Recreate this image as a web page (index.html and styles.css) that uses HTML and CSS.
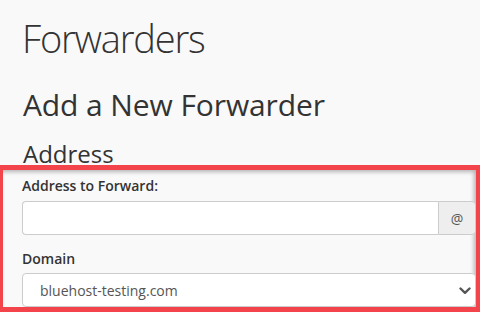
FILE: index.html
```html
<!DOCTYPE html>
<html lang="en">
<head>
<meta charset="utf-8">
<title>Forwarders</title>
<link rel="stylesheet" href="styles.css">
</head>
<body>
<div class="page">
  <h1 class="title">Forwarders</h1>
  <h2 class="subtitle">Add a New Forwarder</h2>
  <h3 class="section">Address</h3>
</div>
<section class="highlight">
  <label class="label" for="fwd">Address to Forward:</label>
  <div class="input-group">
    <input id="fwd" class="input" type="text">
    <span class="addon">@</span>
  </div>
  <label class="label label-domain" for="domain">Domain</label>
  <div class="select-wrap">
    <select id="domain" class="select">
      <option>bluehost-testing.com</option>
    </select>
    <svg class="chevron" width="12" height="8" viewBox="0 0 12 8" aria-hidden="true">
      <path d="M1.5 1.5 L6 5.8 L10.5 1.5" fill="none" stroke="#555" stroke-width="2.4" stroke-linecap="round" stroke-linejoin="round"/>
    </svg>
  </div>
</section>
</body>
</html>
```
FILE: styles.css
```css
* { box-sizing: border-box; }
html, body {
  margin: 0;
  padding: 0;
  height: 312px;
  overflow: hidden;
}
body {
  background: #f9f9f9;
  color: #333;
  font-family: "Open Sans", "Liberation Sans", sans-serif;
}
.page {
  padding-left: 22px;
}
.title {
  margin: 17px 0 0;
  font-size: 38px;
  line-height: 42px;
  font-weight: 300;
  letter-spacing: -1.2px;
}
.subtitle {
  margin: 29px 0 0 1px;
  font-size: 30px;
  line-height: 34px;
  font-weight: 400;
  letter-spacing: -0.1px;
}
.section {
  margin: 20px 0 -1px 1px;
  font-size: 24px;
  line-height: 24px;
  font-weight: 400;
}
.highlight {
  position: relative;
  border-style: solid;
  border-color: #f2444a;
  border-width: 5px 4px 5px 3px;
  padding: 6px 0 0 19px;
  box-shadow: inset -3px 3px 4px -1px rgba(0,0,0,0.28);
  height: 147px;
}
.label {
  display: block;
  font-size: 14px;
  line-height: 20px;
  font-weight: 600;
  color: #333;
}
.input-group {
  display: flex;
  margin-top: 5px;
  height: 34px;
}
.input {
  flex: 1;
  min-width: 0;
  height: 34px;
  border: 1px solid #ccc;
  border-right: 0;
  border-radius: 4px 0 0 4px;
  background: #fff;
  font-family: inherit;
  font-size: 14px;
  padding: 6px 12px;
}
.addon {
  width: 38px;
  height: 34px;
  border: 1px solid #ccc;
  border-radius: 0 4px 4px 0;
  background: #eee;
  color: #555;
  font-size: 14px;
  display: flex;
  align-items: center;
  justify-content: center;
}
.label-domain {
  margin-top: 14px;
}
.select-wrap {
  position: relative;
  margin-top: 4px;
  height: 34px;
}
.select {
  appearance: none;
  -webkit-appearance: none;
  width: 100%;
  height: 34px;
  border: 1px solid #ccc;
  border-radius: 4px;
  background: #fff;
  color: #555;
  font-family: inherit;
  font-size: 14px;
  padding: 0 30px 0 17px;
}
.chevron {
  position: absolute;
  right: 5px;
  top: 14px;
}
```
